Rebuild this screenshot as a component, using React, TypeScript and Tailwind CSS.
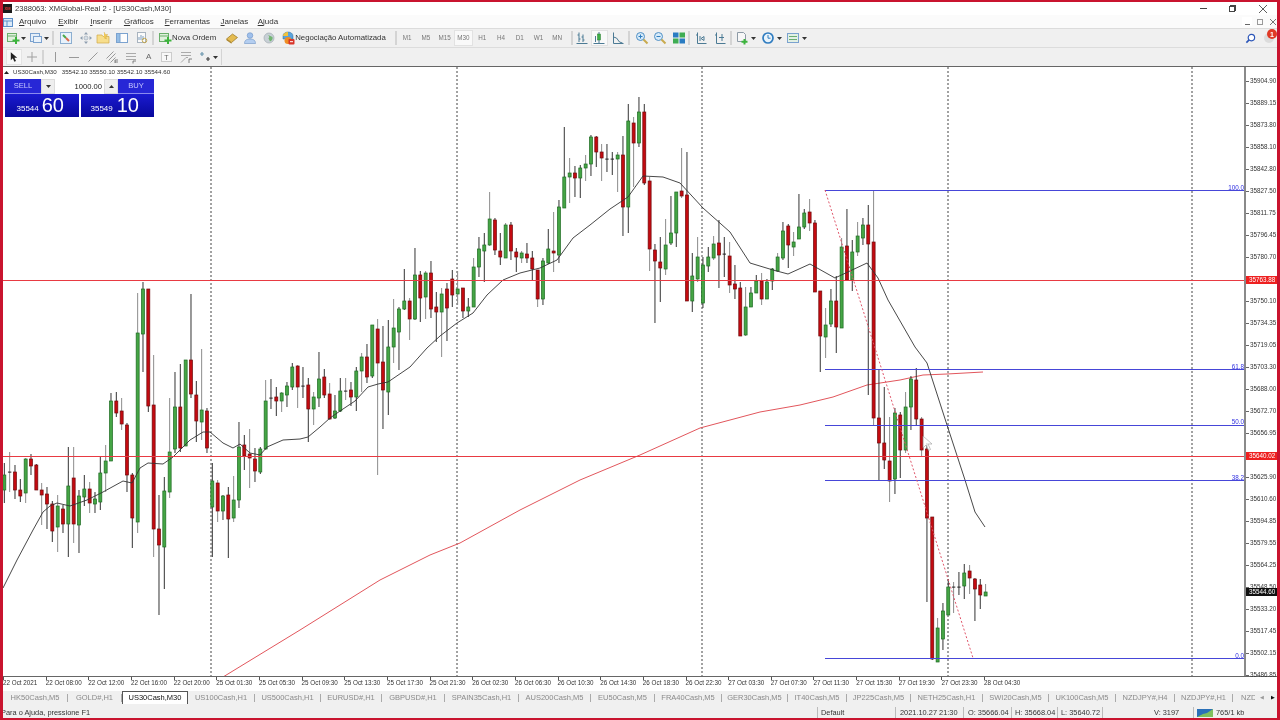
import type { ReactNode } from 'react';

// [high, bodyTop, bodyBottom, low, kind] in screen px; kind: 1 up, 0 down, 2 doji
type Candle = [number, number, number, number, number];

const candles: Candle[] = [
  [463,475,490,503,1],[452,472,473,492,2],[465,472,490,499,0],[479,490,496,502,0],[458,459,493,503,1],
  [454,459,466,475,0],[464,465,490,490,0],[483,490,495,525,0],[487,494,504,529,0],[501,504,531,542,0],
  [495,506,527,552,1],[505,509,524,533,0],[447,486,524,557,1],[447,478,524,543,0],[490,496,525,553,1],
  [475,489,497,506,1],[482,489,503,513,0],[492,499,504,513,1],[457,473,502,510,1],[445,461,473,492,1],
  [393,401,461,460,1],[392,401,413,417,0],[398,411,424,430,0],[423,425,475,492,0],[473,475,518,548,0],
  [293,333,522,533,1],[282,289,334,372,1],[289,289,406,412,0],[355,405,529,557,0],[495,529,545,615,0],
  [477,491,547,589,1],[398,452,492,498,1],[372,407,449,453,1],[364,407,448,452,0],[360,360,446,446,1],
  [294,360,394,398,0],[381,395,421,442,0],[349,410,422,440,1],[408,411,448,453,0],[463,481,507,557,1],
  [480,483,511,522,0],[495,496,511,520,1],[487,495,519,558,0],[476,500,518,522,1],[422,447,500,508,1],
  [435,445,456,470,0],[429,454,458,488,0],[448,459,471,482,0],[447,449,472,474,1],[380,401,449,450,1],
  [379,398,399,409,2],[387,397,401,416,0],[392,393,401,412,1],[382,386,395,407,1],[363,367,387,390,1],
  [365,366,387,408,0],[367,386,387,398,2],[378,385,409,442,0],[392,397,409,425,1],[352,379,398,407,1],
  [369,377,395,398,0],[383,394,419,420,0],[395,411,418,419,1],[378,391,411,412,1],[378,391,392,400,2],
  [382,390,397,406,0],[367,371,397,411,1],[353,357,371,392,1],[344,357,377,383,0],[325,325,376,378,1],
  [319,329,363,475,0],[326,362,390,429,0],[320,347,392,415,1],[299,328,347,363,1],[307,309,332,370,1],
  [269,301,309,310,1],[298,301,319,340,0],[248,275,319,320,1],[271,275,298,322,0],[271,273,297,319,1],
  [261,273,309,318,0],[292,307,312,342,0],[288,294,312,357,1],[283,289,308,341,0],[270,279,295,307,0],
  [271,289,294,305,1],[288,288,311,318,0],[298,307,311,317,1],[258,267,307,307,1],[237,249,267,277,1],
  [233,245,251,282,1],[192,219,245,246,1],[218,220,250,255,0],[233,251,257,265,0],[223,225,258,258,1],
  [222,225,251,260,0],[248,252,257,272,0],[251,253,258,263,1],[243,254,258,263,0],[251,258,269,280,0],
  [270,270,299,307,0],[258,261,299,305,1],[229,249,263,264,1],[212,251,253,272,0],[200,207,255,263,1],
  [127,177,208,208,1],[158,173,177,203,1],[166,173,178,197,0],[165,168,178,198,1],[155,164,168,181,1],
  [135,137,164,176,1],[136,137,152,167,0],[144,152,158,181,0],[144,159,160,172,2],[152,159,160,175,2],
  [152,155,159,192,1],[136,155,207,236,0],[104,121,207,233,1],[117,123,143,187,0],[97,112,143,147,1],
  [104,112,183,185,0],[177,181,249,271,0],[244,250,261,323,0],[237,262,268,302,0],[219,245,269,275,1],
  [196,233,243,245,1],[192,192,233,247,1],[148,191,196,198,0],[152,195,301,301,0],[253,276,301,312,1],
  [237,257,279,282,1],[257,265,303,308,1],[247,257,266,272,1],[236,244,258,260,1],[220,243,255,288,0],
  [237,254,255,277,2],[242,256,285,293,0],[265,284,289,299,0],[282,288,336,336,0],[287,307,335,336,1],
  [287,293,307,307,1],[275,281,293,293,1],[273,281,299,305,0],[279,282,299,299,1],[268,269,281,290,1],
  [253,257,271,272,1],[222,231,258,260,1],[224,226,245,268,0],[232,242,247,256,1],[194,227,239,239,1],
  [209,213,227,229,1],[199,212,223,231,0],[220,223,292,292,0],[291,291,336,372,0],[308,325,337,358,1],
  [289,301,324,327,1],[276,301,327,353,0],[238,247,328,328,1],[209,246,280,280,0],[240,252,280,291,1],
  [222,236,252,256,1],[218,225,238,245,1],[205,225,244,395,0],[190,242,418,425,0],[369,418,443,480,0],
  [387,443,460,469,0],[417,461,481,502,0],[408,413,479,494,1],[412,415,450,478,0],[392,407,450,453,1],
  [376,379,407,430,1],[368,380,419,425,0],[417,419,450,456,0],[443,449,518,602,0],[517,517,659,660,0],
  [618,628,662,662,1],[603,611,639,650,1],[579,587,615,615,1],[582,587,588,613,2],[572,587,588,595,2],
  [564,573,586,599,1],[565,571,578,594,0],[578,579,589,621,0],[579,585,595,609,0],[584,592,596,596,1],
];

const blackMa = '3,588 17,560 33,530 43,512 50,506 57,503 70,506 87,500 103,492 123,481 132,483 140,468 148,463 163,464 173,457 190,440 203,432 210,432 223,443 233,448 240,444 250,453 260,455 267,447 283,440 300,439 308,437 320,427 330,418 340,411 355,401 368,387 378,384 388,382 410,367 427,348 440,336 457,323 473,313 487,295 503,280 520,273 540,268 557,260 573,238 590,225 610,209 628,197 643,176 663,177 680,183 703,208 730,232 750,263 773,270 788,274 810,264 835,278 867,263 878,278 888,300 915,347 927,363 947,425 965,480 975,512 985,527';
const redMa = '223,677 300,630 380,580 430,555 460,543 520,510 580,480 640,455 700,428 760,412 800,405 833,397 867,385 900,380 923,375 947,374 983,372';

const fibLevels = [
  { y: 190, label: '100.0', ly: 187.5 },
  { y: 369, label: '61.8', ly: 366.5 },
  { y: 425, label: '50.0', ly: 422 },
  { y: 480, label: '38.2', ly: 477.5 },
  { y: 658, label: '0.0', ly: 655.5 },
];

const prices = ['35904.90','35889.15','35873.80','35858.10','35842.80','35827.50','35811.75','35796.45','35780.70','35765.40','35750.10','35734.35','35719.05','35703.30','35688.00','35672.70','35656.95','35641.65','35625.90','35610.60','35594.85','35579.55','35564.25','35548.50','35533.20','35517.45','35502.15','35486.85'];

const times = ['22 Oct 2021','22 Oct 08:00','22 Oct 12:00','22 Oct 16:00','22 Oct 20:00','25 Oct 01:30','25 Oct 05:30','25 Oct 09:30','25 Oct 13:30','25 Oct 17:30','25 Oct 21:30','26 Oct 02:30','26 Oct 06:30','26 Oct 10:30','26 Oct 14:30','26 Oct 18:30','26 Oct 22:30','27 Oct 03:30','27 Oct 07:30','27 Oct 11:30','27 Oct 15:30','27 Oct 19:30','27 Oct 23:30','28 Oct 04:30'];

const tabs = [
  { label: 'HK50Cash,M5', w: 'w-[65px]' },
  { label: 'GOLD#,H1', w: 'w-[54px]' },
  { label: 'US30Cash,M30', w: 'w-[66px]', active: true },
  { label: 'US100Cash,H1', w: 'w-[67px]' },
  { label: 'US500Cash,H1', w: 'w-[66px]' },
  { label: 'EURUSD#,H1', w: 'w-[61px]' },
  { label: 'GBPUSD#,H1', w: 'w-[63px]' },
  { label: 'SPAIN35Cash,H1', w: 'w-[74px]' },
  { label: 'AUS200Cash,M5', w: 'w-[72px]' },
  { label: 'EU50Cash,M5', w: 'w-[64px]' },
  { label: 'FRA40Cash,M5', w: 'w-[67px]' },
  { label: 'GER30Cash,M5', w: 'w-[66px]' },
  { label: 'IT40Cash,M5', w: 'w-[59px]' },
  { label: 'JP225Cash,M5', w: 'w-[64px]' },
  { label: 'NETH25Cash,H1', w: 'w-[72px]' },
  { label: 'SWI20Cash,M5', w: 'w-[66px]' },
  { label: 'UK100Cash,M5', w: 'w-[67px]' },
  { label: 'NZDJPY#,H4', w: 'w-[59px]' },
  { label: 'NZDJPY#,H1', w: 'w-[58px]' },
];

function Ico({ children, className = 'ml-0' }: { children: ReactNode; className?: string }) {
  return (
    <svg viewBox="0 0 14 14" className={`h-[14px] w-[14px] shrink-0 ${className}`}>
      {children}
    </svg>
  );
}

function Caret({ className = 'ml-[1px]' }: { className?: string }) {
  return (
    <svg viewBox="0 0 5 3" className={`h-[3px] w-[5px] shrink-0 ${className}`}>
      <path d="M0 0h5L2.5 3z" fill="#333" />
    </svg>
  );
}

function Sep({ className = 'mx-[3px]' }: { className?: string }) {
  return <div className={`h-[14px] w-[2px] shrink-0 border-x border-x-[#d4d4d4] bg-[#fafafa] ${className}`} />;
}

function DocPlus() {
  return (
    <>
      <rect x="1.5" y="2.5" width="9" height="8" fill="#dff0dc" stroke="#6aae6a" />
      <path d="M1.5 5h9" stroke="#6aae6a" />
      <path d="M10 6v7M6.5 9.5h7" stroke="#3cb43c" strokeWidth="2" />
    </>
  );
}

function Candles() {
  return (
    <>
      {candles.map(([high, top, bottom, low, kind], i) => {
        const x = 4.33 + 5.333 * i;
        const wick = i % 3 === 1 ? '#8c8c8c' : '#333333';
        if (kind === 2) {
          return (
            <g key={i}>
              <line x1={x} x2={x} y1={high} y2={low} stroke={wick} strokeWidth={1} />
              <rect x={x - 1.7} y={top - 0.4} width={3.4} height={1} fill="#222" />
            </g>
          );
        }
        return (
          <g key={i}>
            <line x1={x} x2={x} y1={high} y2={low} stroke={wick} strokeWidth={1} />
            <rect
              x={x - 1.5}
              y={top}
              width={3}
              height={Math.max(bottom - top, 1)}
              fill={kind === 1 ? '#45a545' : '#c40a10'}
              stroke={kind === 1 ? '#1c6a20' : '#6e0a0c'}
              strokeWidth={0.7}
            />
          </g>
        );
      })}
    </>
  );
}

function Chart() {
  return (
    <svg viewBox="3 67 1241 609" className="block h-full w-full">
      {[211, 457, 702, 948, 1192].map((x) => (
        <line key={x} x1={x} x2={x} y1={67} y2={676} stroke="#444" strokeDasharray="2 2" />
      ))}
      <polyline points={redMa} fill="none" stroke="#e2565c" strokeWidth={1} />
      <Candles />
      <polyline points={blackMa} fill="none" stroke="#333" strokeWidth={0.9} />
      <line x1={3} x2={1244} y1={280.5} y2={280.5} stroke="#e83a42" />
      <line x1={3} x2={1244} y1={456.5} y2={456.5} stroke="#e83a42" />
      {fibLevels.map((f) => (
        <g key={f.label}>
          <line x1={825} x2={1244} y1={f.y + 0.5} y2={f.y + 0.5} stroke="#4646d8" />
          <text x={1244} y={f.ly + 2} textAnchor="end" fontSize={6.3} fill="#3030e0" fontFamily="'Liberation Sans', sans-serif">
            {f.label}
          </text>
        </g>
      ))}
      <line x1={825} y1={190} x2={973} y2={658} stroke="#e0566a" strokeDasharray="2 2" />
      <path d="M923 436v12l3-3 2.5 5.5 2-1-2.5-5.500h4z" fill="#ffffff" fillOpacity={0.75} stroke="#9a9a9a" strokeWidth={0.6} />
    </svg>
  );
}

function TradePanel() {
  return (
    <div className="absolute left-[2px] top-[12px] w-[149px] text-white">
      <div className="flex h-[15px]">
        <div className="flex w-[36px] items-center justify-center border-b border-b-[#8a8aee] bg-[#2727d6] text-[7.6px] text-[#c8c8ff]">SELL</div>
        <div className="flex w-[14px] items-center justify-center border border-[#dcdcdc] bg-[#eeeeee]">
          <Caret className="ml-0" />
        </div>
        <div className="flex w-[49px] items-center justify-end bg-white pr-[2px] text-[7.6px] text-[#222]">1000.00</div>
        <div className="flex w-[14px] items-center justify-center border border-[#dcdcdc] bg-[#eeeeee]">
          <Caret className="ml-0 rotate-180" />
        </div>
        <div className="flex w-[36px] items-center justify-center border-b border-b-[#8a8aee] bg-[#2727d6] text-[7.6px] text-[#c8c8ff]">BUY</div>
      </div>
      <div className="flex h-[23px] justify-between">
        <div className="flex w-[74px] items-end justify-end bg-gradient-to-b from-[#1a1ad0] to-[#08089c] pr-[15px]">
          <span className="mb-[2px] mr-[3px] text-[8px]">35544</span>
          <span className="text-[20px] leading-[23px]">60</span>
        </div>
        <div className="flex w-[73px] items-end justify-end bg-gradient-to-b from-[#1a1ad0] to-[#08089c] pr-[15px]">
          <span className="mb-[2px] mr-[4px] text-[8px]">35549</span>
          <span className="text-[20px] leading-[23px]">10</span>
        </div>
      </div>
    </div>
  );
}

function TitleBar() {
  return (
    <div className="flex h-[13px] items-center bg-white text-[#333]">
      <div className="flex h-[9px] w-[9px] items-center justify-center bg-[#1a1a1a] text-[4px] font-bold leading-none text-[#e53935]">XM</div>
      <span className="ml-[3px] text-[7.6px]">2388063: XMGlobal-Real 2 - [US30Cash,M30]</span>
      <div className="ml-auto flex items-center">
        <div className="h-px w-[7px] bg-[#444]" />
        <div className="relative ml-[22px] h-[6px] w-[6px] border border-[#444]">
          <div className="absolute -right-[2px] -top-[2px] h-[6px] w-[6px] border-r border-t border-[#444]" />
        </div>
        <svg viewBox="0 0 8 8" className="ml-[24px] mr-[10px] h-[8px] w-[8px]">
          <path d="M0 0l8 8M8 0L0 8" stroke="#333" strokeWidth={0.8} />
        </svg>
      </div>
    </div>
  );
}

function MenuBar() {
  const items = [
    { label: 'Arquivo', cls: 'ml-[6px]' },
    { label: 'Exibir', cls: 'ml-[12px]' },
    { label: 'Inserir', cls: 'ml-[12px]' },
    { label: 'Gráficos', cls: 'ml-[11.500px]' },
    { label: 'Ferramentas', cls: 'ml-[11px]' },
    { label: 'Janelas', cls: 'ml-[10.500px]' },
    { label: 'Ajuda', cls: 'ml-[9.500px]' },
  ];
  return (
    <div className="flex h-[13px] items-center bg-[#fbfbfb] text-[8px] text-[#333]">
      <svg viewBox="0 0 10 10" className="h-[10px] w-[10px]">
        <rect x="0.5" y="1.500" width="9" height="8" fill="#dceaf8" stroke="#5b8fc9" />
        <path d="M0.500 4h9M4 4v5" stroke="#5b8fc9" />
      </svg>
      {items.map((m) => (
        <span key={m.label} className={`${m.cls} [text-decoration-thickness:0.5px]`}>
          <span className="underline underline-offset-1">{m.label[0]}</span>
          {m.label.slice(1)}
        </span>
      ))}
      <div className="ml-auto flex items-center text-[#777]">
        <div className="flex h-[9px] w-[10px] items-end justify-center bg-white pb-[1px]">
          <div className="h-px w-[5px] bg-[#666]" />
        </div>
        <div className="ml-[5px] h-[6px] w-[6px] border border-[#999]" />
        <svg viewBox="0 0 8 8" className="ml-[7px] mr-[1px] h-[6px] w-[6px]">
          <path d="M0 0l8 8M8 0L0 8" stroke="#666" strokeWidth={1.2} />
        </svg>
      </div>
    </div>
  );
}

function MainToolbar() {
  const periods = ['M1', 'M5', 'M15', 'M30', 'H1', 'H4', 'D1', 'W1', 'MN'];
  return (
    <div className="flex h-[20px] items-center border-y border-y-[#dcdcdc] bg-[#f0f0f0] text-[7.8px] text-[#333]">
      <Ico className="ml-[3px]"><DocPlus /></Ico>
      <Caret />
      <Ico className="ml-[3px]">
        <rect x="1.500" y="2.500" width="9" height="8" fill="#e4eef8" stroke="#7ba2cf" />
        <rect x="4.500" y="5.500" width="8" height="6" fill="#eaf2fa" stroke="#7ba2cf" />
      </Ico>
      <Caret />
      <Sep className="ml-[3px] mr-[2px]" />
      <Ico className="ml-[3px]">
        <rect x="1.500" y="1.500" width="11" height="11" fill="#e8f2fb" stroke="#8caed0" />
        <path d="M4 4l3 3" stroke="#4aa84a" strokeWidth={2} />
        <path d="M7 7l3 3" stroke="#dc6a4a" strokeWidth={2} />
      </Ico>
      <Ico className="ml-[6px]">
        <path d="M7 1l2 2.500H5zM7 13l2-2.500H5zM1 7l2.500 2V5zM13 7l-2.500 2V5z" fill="#8f9fb0" />
        <circle cx="7" cy="7" r="2" fill="#d6dee6" stroke="#98a4b0" strokeWidth={0.6} />
      </Ico>
      <Ico className="ml-[3px]">
        <path d="M1 4h5l1 1.500h6V12H1z" fill="#f7de8c" stroke="#d0aa48" strokeWidth={0.7} />
        <path d="M8 1l1.200 2.400 2.600.3-1.900 1.800.5 2.500L8 6.800" fill="#f3cb55" stroke="#d0aa48" strokeWidth={0.5} />
      </Ico>
      <Ico className="ml-[5px]">
        <rect x="1.500" y="2.500" width="11" height="9" fill="#fdfdfd" stroke="#7ba2cf" />
        <rect x="1.500" y="2.500" width="3.500" height="9" fill="#93bde6" stroke="#7ba2cf" />
      </Ico>
      <Ico className="ml-[6px]">
        <rect x="2.500" y="1.500" width="8" height="10" fill="#fbfbfb" stroke="#a8b3bf" />
        <path d="M4 9V6M6 9V4M8 9V5" stroke="#7d9dbd" />
        <circle cx="9.500" cy="9.500" r="2.200" fill="none" stroke="#c2a447" />
      </Ico>
      <Sep className="ml-[3px] mr-[3px]" />
      <Ico className="ml-[1px]"><DocPlus /></Ico>
      <span className="ml-0">Nova Ordem</span>
      <Ico className="ml-[9px]">
        <path d="M1.500 8l6-5 5 3.500-6 5z" fill="#e4bb50" stroke="#967420" strokeWidth={0.7} />
        <path d="M1.500 8l5 3.500v1.200l-5-3.500z" fill="#ad8428" />
      </Ico>
      <Ico className="ml-[4px]">
        <circle cx="7" cy="4.500" r="2.800" fill="#9fc0ec" stroke="#6c92c4" strokeWidth={0.6} />
        <path d="M1.500 12.500c0-3.500 2.500-4.500 5.500-4.500s5.500 1 5.500 4.500z" fill="#b4cef0" stroke="#6c92c4" strokeWidth={0.6} />
      </Ico>
      <Ico className="ml-[5px]">
        <circle cx="7" cy="7" r="5" fill="#c8d0d6" stroke="#a2abb2" strokeWidth={0.7} />
        <path d="M5 3.500c2 1 3 2 1.500 4l1.500 3c2-1 3-2 2.500-4.500" fill="#72b572" />
      </Ico>
      <Ico className="ml-[5px]">
        <path d="M2 5a5 4 0 0 1 10 0v3H2z" fill="#59a3dc" stroke="#2d6d9f" strokeWidth={0.5} />
        <path d="M2 5a5 4 0 0 1 5-4v4z" fill="#f3c33a" />
        <circle cx="7" cy="9.500" r="3.500" fill="#ef8d24" />
        <rect x="7.500" y="8" width="6" height="5.500" rx="1" fill="#d8352a" />
        <path d="M9 10.700h3" stroke="#fff" />
      </Ico>
      <span className="ml-0">Negociação Automatizada</span>
      <Sep className="ml-[9px] mr-[1px]" />
      <div className="flex text-[6.3px] text-[#777]">
        {periods.map((p) => (
          <div
            key={p}
            className={
              p === 'M30'
                ? 'flex h-[16px] w-[18.75px] items-center justify-center border border-[#e2e2e2] bg-[#f9f9f9]'
                : 'flex h-[16px] w-[18.75px] items-center justify-center'
            }
          >
            {p}
          </div>
        ))}
      </div>
      <Sep className="ml-[4px] mr-[2px]" />
      <Ico>
        <path d="M4 1.500V11M2.500 4H4M4 8h1.500M8 3.500V11M6.500 6H8M8 9h1.500M1.500 12.500h11" stroke="#4b7a94" fill="none" />
      </Ico>
      <div className="ml-[2px] flex h-[16px] w-[17px] items-center justify-center border border-[#e2e2e2] bg-[#f9f9f9]">
        <Ico>
          <path d="M7 1v11M1.500 12.500h11M3.500 5v6" stroke="#4b7a94" fill="none" />
          <rect x="5.500" y="3" width="3" height="6" fill="#3eb046" stroke="#2c7a32" strokeWidth={0.5} />
        </Ico>
      </div>
      <Ico className="ml-[3px]">
        <path d="M2.500 1.500v11h10M2.500 6l3 1 3 4 3 1" stroke="#4b7a94" fill="none" />
      </Ico>
      <Sep className="ml-[3px] mr-[2px]" />
      <Ico className="ml-[3px]">
        <circle cx="5.500" cy="5.500" r="4" fill="#d6eaf9" stroke="#4f8fc4" />
        <path d="M8.500 8.500l4 4" stroke="#c8aa4e" strokeWidth={2} />
        <path d="M3.500 5.500h4M5.500 3.500v4" stroke="#2f7fc0" />
      </Ico>
      <Ico className="ml-[4px]">
        <circle cx="5.500" cy="5.500" r="4" fill="#d6eaf9" stroke="#4f8fc4" />
        <path d="M8.500 8.500l4 4" stroke="#c8aa4e" strokeWidth={2} />
        <path d="M3.500 5.500h4" stroke="#2f7fc0" />
      </Ico>
      <Ico className="ml-[5px]">
        <rect x="1" y="1.500" width="5.500" height="5" fill="#2a7cc2" />
        <rect x="7.500" y="1.500" width="5.500" height="5" fill="#3fad53" />
        <rect x="1" y="7.500" width="5.500" height="5" fill="#3fad53" />
        <rect x="7.500" y="7.500" width="5.500" height="5" fill="#2a7cc2" />
      </Ico>
      <Sep className="ml-[2px] mr-[2px]" />
      <Ico className="ml-[2px]">
        <path d="M3.500 1.500v11h9M3.500 4H2M6 5v5M7 7.500l3-2v4z" stroke="#4b7a94" fill="none" />
      </Ico>
      <Ico className="ml-[5px]">
        <path d="M3.500 1.500v11h9M3.500 4H2M9 3v7M6 6.500h5" stroke="#4b7a94" fill="none" />
      </Ico>
      <Sep className="ml-[3px] mr-[3px]" />
      <Ico><path d="M2.500 1.500h6l2 2v7h-8z" fill="#f7f7f7" stroke="#8d9aa6" /><path d="M9.500 8v5.500M6.500 10.700h6" stroke="#3cb43c" strokeWidth={2} /></Ico>
      <Caret className="ml-[2px]" />
      <Ico className="ml-[5px]">
        <circle cx="7" cy="7" r="5" fill="#e8f3fb" stroke="#2f7cc0" strokeWidth={1.7} />
        <path d="M7 4v3.200h2.500" stroke="#2f7cc0" fill="none" />
      </Ico>
      <Caret className="ml-[2px]" />
      <Ico className="ml-[4px]">
        <rect x="1.500" y="2.500" width="11" height="9" fill="#e2f0e4" stroke="#7ba2cf" />
        <path d="M3 5.500h8M3 8.500h8" stroke="#6aad72" />
      </Ico>
      <Caret className="ml-[2px]" />
      <div className="ml-auto flex items-center">
        <svg viewBox="0 0 12 12" className="h-[11px] w-[11px]">
          <circle cx="7" cy="5" r="3.500" fill="#fff" stroke="#2b55b8" strokeWidth={1.300} />
          <path d="M4.500 7.500L1.500 10.500" stroke="#2b55b8" strokeWidth={1.800} />
        </svg>
        <div className="relative ml-[8px] mr-[3px] h-[10px] w-[10px] rounded-full bg-[#dcdcdc]">
          <div className="absolute -right-[3px] -top-[4px] flex h-[10px] w-[10px] items-center justify-center rounded-full bg-[#e03a26] text-[7px] font-bold leading-none text-white">1</div>
        </div>
      </div>
    </div>
  );
}

function DrawToolbar() {
  return (
    <div className="flex h-[18px] items-center bg-[#f0f0f0]">
      <div className="ml-[3px] flex h-[16px] w-[16px] items-center justify-center border border-[#e4e4e4] bg-[#f8f8f8]">
        <svg viewBox="0 0 10 12" className="h-[10px] w-[8px]">
          <path d="M1 0v10l2.500-2.500L5.500 12l2-1-2-4H9z" fill="#222" />
        </svg>
      </div>
      <Ico className="ml-[3px]"><path d="M7 2v10M2 7h10" stroke="#a0a0a0" /></Ico>
      <Sep className="ml-[3px] mr-[3px]" />
      <Ico className="ml-[1px]"><path d="M7.500 2v10" stroke="#999" /></Ico>
      <Ico className="ml-[5px]"><path d="M2 7.500h10" stroke="#999" /></Ico>
      <Ico className="ml-[5px]"><path d="M2.500 11.500l9-9" stroke="#999" /></Ico>
      <Ico className="ml-[5px]">
        <path d="M1.500 8.500l7-7M3.500 10.500l7-7M5.500 12.500l5-5" stroke="#999" />
        <path d="M10 10h3M10 12h3M10 10v3" stroke="#555" strokeWidth={0.7} />
      </Ico>
      <Ico className="ml-[5px]">
        <path d="M2 3.500h10M2 6.500h10M2 9.500h10" stroke="#aaa" />
        <path d="M9 11h3M9 11v2.500" stroke="#555" strokeWidth={0.7} />
      </Ico>
      <span className="ml-[8px] w-[8px] text-[8px] leading-none text-[#666]">A</span>
      <div className="ml-[7px] flex h-[10px] w-[11px] items-center justify-center border border-[#ccc] bg-[#f8f8f8] text-[7px] leading-none text-[#666]">T</div>
      <Ico className="ml-[7px]">
        <path d="M2 2.500h10M2 5.500h10" stroke="#aaa" />
        <path d="M2 12.500l5-5h2" stroke="#aaa" fill="none" />
        <path d="M10 9h3M10 9v4" stroke="#555" strokeWidth={0.7} />
      </Ico>
      <Ico className="ml-[5px]">
        <path d="M2 4h4M4 2v4" stroke="#6a96ae" strokeWidth={1.200} />
        <path d="M8 9h4M10 7v4" stroke="#444" strokeWidth={1.200} />
      </Ico>
      <Caret className="ml-[1px]" />
      <div className="ml-[3px] h-[16px] w-px bg-[#d4d4d4]" />
    </div>
  );
}

function PriceAxis() {
  return (
    <div className="relative w-[31px] shrink-0 bg-white pt-[3px] text-[6.3px] leading-none text-[#333]">
      {prices.map((p) => (
        <div key={p} className="flex h-[22px] items-center">
          <div className="h-px w-[3px] bg-[#666]" />
          <span className="ml-px">{p}</span>
        </div>
      ))}
      <div className="absolute left-0 top-[209px] w-[31px] bg-[#ee2020] px-[3px] py-[1px] text-white">35763.88</div>
      <div className="absolute left-0 top-[385px] w-[31px] bg-[#ee2020] px-[3px] py-[1px] text-white">35640.02</div>
      <div className="absolute left-0 top-[521px] w-[31px] bg-[#111] px-[3px] py-[1px] text-white">35544.60</div>
    </div>
  );
}

function TimeAxis() {
  return (
    <div className="flex h-[14px] bg-white text-[6.3px] leading-none text-[#333]">
      {times.map((t) => (
        <div key={t} className="w-[42.67px] shrink-0">
          <div className="h-[3px] w-px bg-[#555]" />
          <div>{t}</div>
        </div>
      ))}
    </div>
  );
}

function TabStrip() {
  return (
    <div className="flex h-[13px] items-center bg-[#f0f0f0] text-[7.500px] text-[#8a8a8a]">
      {tabs.map((t) =>
        t.active ? (
          <div key={t.label} className={`flex h-[13px] items-center justify-center border-x border-t border-x-[#555] border-t-[#555] bg-white text-[#111] ${t.w}`}>
            {t.label}
          </div>
        ) : (
          <div key={t.label} className={`flex h-[8px] items-center justify-center border-r border-r-[#aaa] ${t.w}`}>
            {t.label}
          </div>
        )
      )}
      <span className="ml-[8px] w-[14px] overflow-hidden">NZD</span>
      <div className="ml-auto flex items-center text-[5px] leading-none">
        <span className="text-[#999]">◀</span>
        <span className="ml-[7px] mr-[2px] text-[#111]">▶</span>
      </div>
    </div>
  );
}

function StatusBar() {
  return (
    <div className="flex h-[14px] items-center bg-[#f0f0f0] pt-[3px] text-[7.400px] leading-none text-[#333]">
      <div className="-ml-[2px] w-[816px]">Para o Ajuda, pressione F1</div>
      <div className="h-[11px] w-[78px] border-l border-l-[#bbb] pl-[3px] leading-[11px]">Default</div>
      <div className="h-[11px] w-[68px] border-l border-l-[#bbb] pl-[4px] leading-[11px]">2021.10.27 21:30</div>
      <div className="h-[11px] w-[48px] border-l border-l-[#bbb] pl-[4px] leading-[11px]">O: 35666.04</div>
      <div className="h-[11px] w-[46px] border-l border-l-[#bbb] pl-[3px] leading-[11px]">H: 35668.04</div>
      <div className="h-[11px] w-[45px] border-l border-l-[#bbb] pl-[3px] leading-[11px]">L: 35640.72</div>
      <div className="h-[11px] w-[91px] border-l border-l-[#bbb] pl-[51px] leading-[11px]">V: 3197</div>
      <div className="flex h-[11px] flex-1 items-center border-l border-l-[#bbb] pl-[3px]">
        <svg viewBox="0 0 16 8" className="h-[8px] w-[16px]">
          <rect width="16" height="8" fill="#2a70b8" />
          <path d="M0 8l6-3 4-1 6-4v8z" fill="#7fbf5e" />
        </svg>
        <span className="ml-[3px]">765/1 kb</span>
      </div>
    </div>
  );
}

export default function App() {
  return (
    <div className="flex h-[720px] w-[1280px] flex-col overflow-hidden border-x-[3px] border-y-2 border-x-[#c9142f] border-y-[#c9142f] bg-white font-['Liberation_Sans',sans-serif] blur-[0.35px]">
      <TitleBar />
      <MenuBar />
      <MainToolbar />
      <DrawToolbar />
      <main className="flex h-[611px] border-y border-y-[#666]">
        <div className="relative flex-1 border-r-[2px] border-r-[#8a8a8a]">
          <Chart />
          <div className="absolute left-[1px] top-[2px] flex items-center text-[6.2px] leading-none text-[#333]">
            <svg viewBox="0 0 5 3" className="h-[3px] w-[5px]">
              <path d="M0 3h5L2.500 0z" fill="#222" />
            </svg>
            <span className="ml-[4px]">US30Cash,M30</span>
            <span className="ml-[5px]">35542.10 35550.10 35542.10 35544.60</span>
          </div>
          <TradePanel />
        </div>
        <PriceAxis />
      </main>
      <TimeAxis />
      <TabStrip />
      <StatusBar />
    </div>
  );
}
